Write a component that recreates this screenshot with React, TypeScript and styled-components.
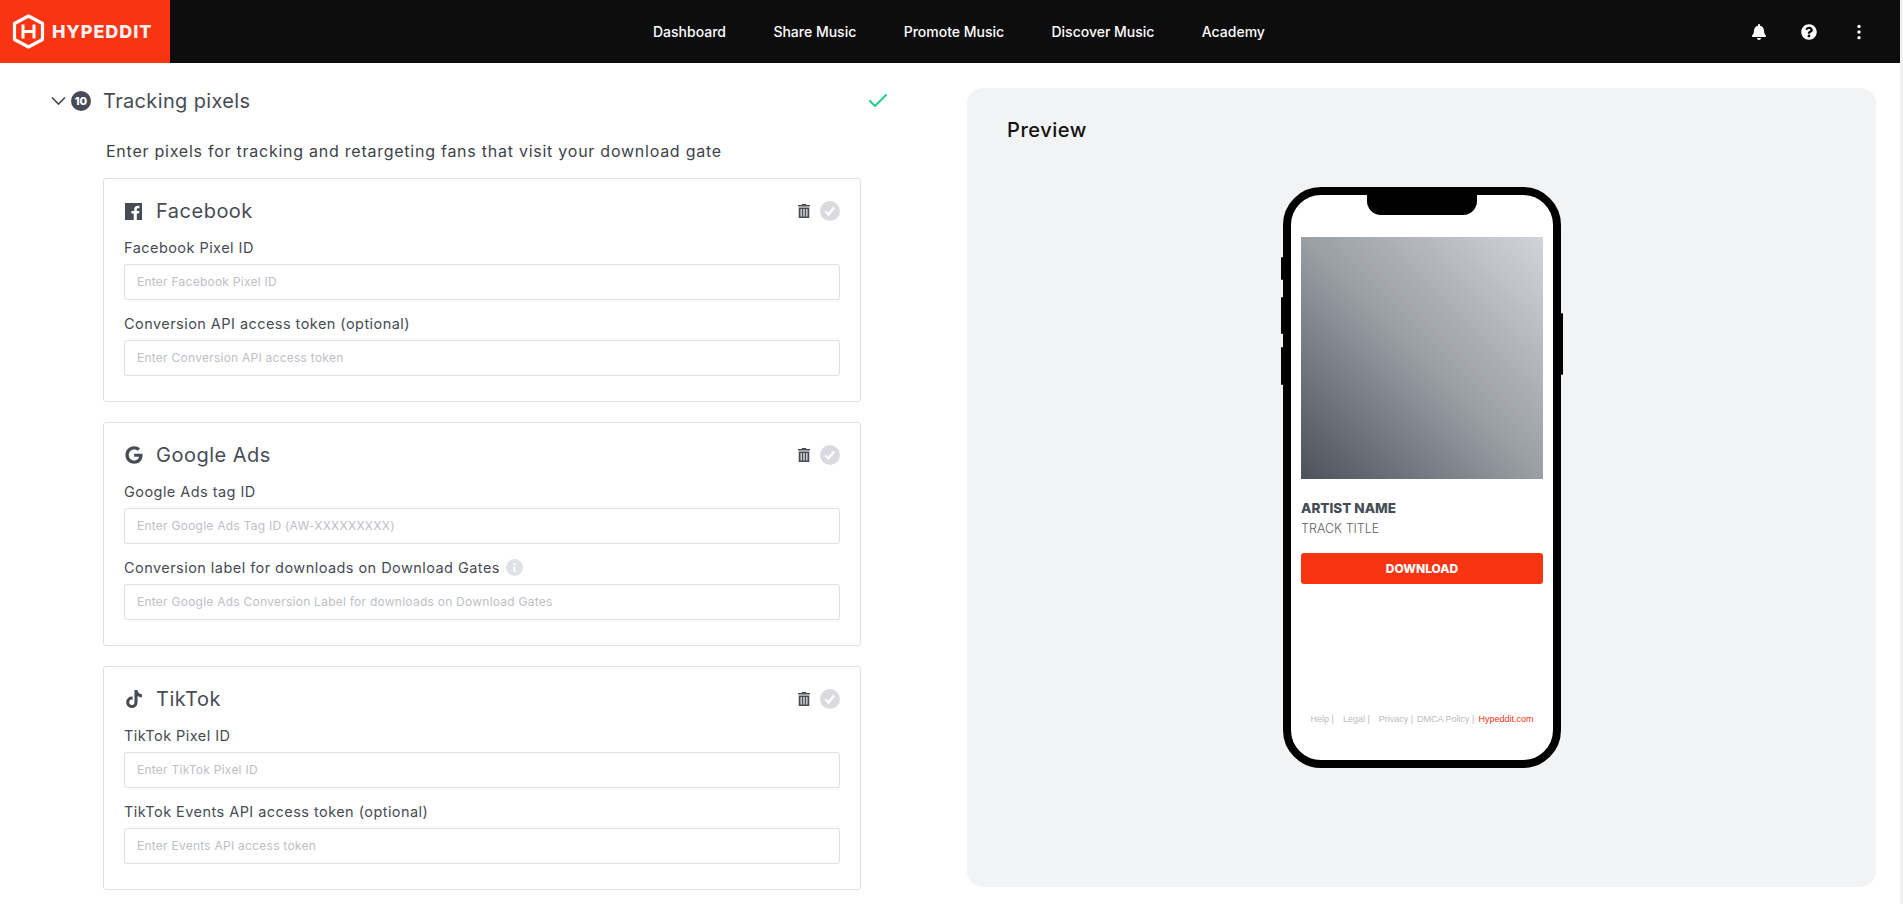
import React from 'react';
import styled, { createGlobalStyle } from 'styled-components';
import { FaBell, FaGoogle, FaTiktok, FaQuestionCircle } from 'react-icons/fa';
import { BsThreeDotsVertical } from 'react-icons/bs';
import { FiCheck } from 'react-icons/fi';

const GlobalStyle = createGlobalStyle`
  html, body {
    margin: 0;
    height: 904px;
    overflow: hidden;
    background: #fff;
  }
  * { box-sizing: border-box; }
`;

const TEXT = '#464c55';
const FONT = `Inter, "Open Sans", sans-serif`;

const ChevronIcon = () => (
  <svg width="15" height="10" viewBox="0 0 15 10">
    <path d="M1 1.500l6.500 6.500 6.500-6.500" fill="none" stroke={TEXT} strokeWidth="1.700" />
  </svg>
);

const FacebookIcon = () => (
  <svg width="17" height="17" viewBox="0 0 17 17">
    <path
      fill={TEXT}
      d="M0 0h17v17h-5.200v-6.400h2.200l.4-2.600h-2.600V6.500c0-.8.3-1.300 1.400-1.300h1.300V2.900c-.4 0-1.100-.1-1.900-.1-2 0-3.400 1.200-3.400 3.400V8H6.400v2.600h2.300V17H0z"
    />
  </svg>
);

const TrashIcon = () => (
  <svg width="12" height="14" viewBox="0 0 12 14">
    <path
      fill={TEXT}
      d="M4 0h4l.5 1H12v1.500H0V1h3.500zM.7 3.500h10.600V14H.7zM2.600 5v7.500h1.100V5zm2.800 0v7.500h1.200V5zm2.900 0v7.500h1.100V5z"
      fillRule="evenodd"
    />
  </svg>
);

const CheckDisc = () => (
  <svg width="20" height="20" viewBox="0 0 20 20">
    <circle cx="10" cy="10" r="10" fill="#d9dbe0" />
    <path d="M5.500 10.500l3 3 5.500-7" fill="none" stroke="#fff" strokeWidth="2.400" />
  </svg>
);

const InfoIcon = () => (
  <svg width="17" height="17" viewBox="0 0 17 17">
    <circle cx="8.500" cy="8.500" r="8.500" fill="#dfe2e6" />
    <rect x="7.500" y="7.500" width="2" height="5.500" fill="#fff" />
    <rect x="7.500" y="4" width="2" height="2" fill="#fff" />
  </svg>
);

const LogoMark = () => (
  <svg width="33" height="35" viewBox="0 0 33 35">
    <path
      d="M16.500 2 L30.500 9.500 V25.500 L16.500 33 L2.500 25.500 V9.500 Z"
      fill="none"
      stroke="#fff"
      strokeWidth="3.200"
      strokeLinejoin="round"
    />
    <path d="M11 10.500v14M22 10.500v14M11 17.500h11" stroke="#fff" strokeWidth="3" fill="none" />
    <path d="M16.500 9v7" stroke="#f93412" strokeWidth="2" />
  </svg>
);

const navItems = ['Dashboard', 'Share Music', 'Promote Music', 'Discover Music', 'Academy'];

const cards = [
  {
    name: 'Facebook',
    icon: <FacebookIcon />,
    fields: [
      { label: 'Facebook Pixel ID', placeholder: 'Enter Facebook Pixel ID' },
      { label: 'Conversion API access token (optional)', placeholder: 'Enter Conversion API access token' },
    ],
  },
  {
    name: 'Google Ads',
    icon: <FaGoogle size={18} color={TEXT} />,
    fields: [
      { label: 'Google Ads tag ID', placeholder: 'Enter Google Ads Tag ID (AW-XXXXXXXXX)' },
      {
        label: 'Conversion label for downloads on Download Gates',
        placeholder: 'Enter Google Ads Conversion Label for downloads on Download Gates',
        info: true,
      },
    ],
  },
  {
    name: 'TikTok',
    icon: <FaTiktok size={18} color={TEXT} />,
    fields: [
      { label: 'TikTok Pixel ID', placeholder: 'Enter TikTok Pixel ID' },
      { label: 'TikTok Events API access token (optional)', placeholder: 'Enter Events API access token' },
    ],
  },
];

const footerLinks = [
  { text: 'Help |', gap: 9 },
  { text: 'Legal |', gap: 9 },
  { text: 'Privacy |', gap: 4 },
  { text: 'DMCA Policy |', gap: 4 },
];

const App = () => (
  <Page>
    <GlobalStyle />
    <Content>
      <Header>
        <LogoBlock>
          <LogoMark />
          <LogoText>HYPEDDIT</LogoText>
        </LogoBlock>
        <Nav>
          {navItems.map((item) => (
            <NavLink key={item}>{item}</NavLink>
          ))}
        </Nav>
        <HeaderIcons>
          <FaBell size={16} />
          <FaQuestionCircle size={16} />
          <BsThreeDotsVertical size={18} />
        </HeaderIcons>
      </Header>
      <Main>
        <LeftColumn>
          <SectionHeader>
            <ChevronIcon />
            <Badge>10</Badge>
            <SectionTitle>Tracking pixels</SectionTitle>
            <DoneCheck>
              <FiCheck size={24} />
            </DoneCheck>
          </SectionHeader>
          <Intro>Enter pixels for tracking and retargeting fans that visit your download gate</Intro>
          <CardList>
            {cards.map((card) => (
              <Card key={card.name}>
                <CardHead>
                  <CardIcon>{card.icon}</CardIcon>
                  <CardTitle>{card.name}</CardTitle>
                  <CardActions>
                    <TrashIcon />
                    <CheckDisc />
                  </CardActions>
                </CardHead>
                {card.fields.map((field) => (
                  <Field key={field.label}>
                    <Label>
                      {field.label}
                      {field.info && <InfoIcon />}
                    </Label>
                    <Input placeholder={field.placeholder} />
                  </Field>
                ))}
              </Card>
            ))}
          </CardList>
        </LeftColumn>
        <PreviewPanel>
          <PreviewTitle>Preview</PreviewTitle>
          <PhoneRow>
            <Phone>
              <SideButton $side="left" $top={62} $height={23} />
              <SideButton $side="left" $top={102} $height={37} />
              <SideButton $side="left" $top={152} $height={38} />
              <SideButton $side="right" $top={118} $height={62} />
              <Notch />
              <Artwork />
              <ArtistName>ARTIST NAME</ArtistName>
              <TrackTitle>TRACK TITLE</TrackTitle>
              <DownloadButton>DOWNLOAD</DownloadButton>
              <PhoneFooter>
                {footerLinks.map((link) => (
                  <FooterLink key={link.text} $gap={link.gap}>
                    {link.text}
                  </FooterLink>
                ))}
                <FooterBrand>Hypeddit.com</FooterBrand>
              </PhoneFooter>
            </Phone>
          </PhoneRow>
        </PreviewPanel>
      </Main>
    </Content>
    <ScrollTrack />
  </Page>
);

const Page = styled.div`
  display: flex;
  width: 1903px;
  height: 904px;
  overflow: hidden;
  font-family: ${FONT};
  color: ${TEXT};
`;

const Content = styled.div`
  flex: 1;
  min-width: 0;
`;

const ScrollTrack = styled.div`
  flex: none;
  width: 3px;
  background: #f0f0f0;
`;

const Header = styled.header`
  display: grid;
  grid-template-columns: 170px 1fr 161px;
  height: 63px;
  background: #0d0d0d;
  color: #fff;
`;

const LogoBlock = styled.div`
  display: flex;
  align-items: center;
  gap: 7px;
  padding-left: 12px;
  background: #f93412;
`;

const LogoText = styled.span`
  font-size: 18px;
  font-weight: 800;
  letter-spacing: 0.9px;
  color: #f4f1f0;
`;

const Nav = styled.nav`
  display: flex;
  align-items: center;
  gap: 47.400px;
  padding-left: 483px;
`;

const NavLink = styled.a`
  font-size: 14px;
  font-weight: 500;
  white-space: nowrap;
`;

const HeaderIcons = styled.div`
  display: flex;
  align-items: center;
  gap: 33.500px;
  padding-left: 12px;
`;

const Main = styled.main`
  display: flex;
  height: 841px;
`;

const LeftColumn = styled.section`
  width: 967px;
  padding: 24px 0 0 51px;
`;

const SectionHeader = styled.div`
  display: flex;
  align-items: center;
  width: 839px;
  height: 28px;
`;

const Badge = styled.span`
  display: flex;
  align-items: center;
  justify-content: center;
  width: 20px;
  height: 20px;
  margin-left: 5px;
  border-radius: 50%;
  background: ${TEXT};
  color: #fff;
  font-size: 11px;
  font-weight: 800;
`;

const SectionTitle = styled.h2`
  margin: 0 0 0 12px;
  font-size: 20px;
  font-weight: 400;
  letter-spacing: 0.35px;
  color: ${TEXT};
`;

const DoneCheck = styled.span`
  display: flex;
  margin-left: auto;
  color: #1fd287;
`;

const Intro = styled.p`
  margin: 25px 0 0 55px;
  font-size: 16px;
  line-height: 22px;
  letter-spacing: 0.75px;
  color: #3d434b;
`;

const CardList = styled.div`
  display: flex;
  flex-direction: column;
  gap: 20px;
  width: 758px;
  margin: 16px 0 0 52px;
`;

const Card = styled.article`
  height: 224px;
  padding: 22px 20px 0;
  border: 1px solid #dde1e6;
  border-radius: 3px;
`;

const CardHead = styled.div`
  display: flex;
  align-items: center;
  height: 20px;
`;

const CardIcon = styled.span`
  display: flex;
  width: 32px;
  padding-left: 1px;
`;

const CardTitle = styled.h3`
  margin: 0;
  font-size: 20px;
  font-weight: 400;
  letter-spacing: 0.5px;
  color: ${TEXT};
`;

const CardActions = styled.div`
  display: flex;
  align-items: center;
  gap: 10px;
  margin-left: auto;
`;

const Field = styled.div`
  margin-top: 15px;
  & + & {
    margin-top: 12px;
  }
`;

const Label = styled.label`
  display: flex;
  align-items: center;
  gap: 6px;
  height: 22px;
  margin-bottom: 6px;
  font-size: 14.500px;
  letter-spacing: 0.45px;
  color: ${TEXT};
`;

const Input = styled.input`
  display: block;
  width: 100%;
  height: 36px;
  padding: 0 12px 2px;
  border: 1px solid #dde1e6;
  border-radius: 3px;
  outline: none;
  font-family: ${FONT};
  font-size: 12px;
  letter-spacing: 0.25px;
  &::placeholder {
    color: #bcc0c7;
  }
`;

const PreviewPanel = styled.section`
  width: 909px;
  height: 799px;
  margin-top: 25px;
  padding: 30px 40px 0;
  border-radius: 16px;
  background: #f2f3f5;
`;

const PreviewTitle = styled.h2`
  margin: 0;
  font-size: 20px;
  line-height: 24px;
  font-weight: 500;
  letter-spacing: 0.55px;
  color: #111;
`;

const PhoneRow = styled.div`
  display: flex;
  padding: 45px 0 0 276px;
`;

const Phone = styled.div`
  position: relative;
  display: flex;
  flex-direction: column;
  width: 278px;
  height: 581px;
  padding: 42px 10px 0;
  border: 8px solid #000;
  border-radius: 38px;
  background: #fff;
`;

const SideButton = styled.span<{ $side: 'left' | 'right'; $top: number; $height: number }>`
  position: absolute;
  ${(p) => p.$side}: -10px;
  top: ${(p) => p.$top}px;
  width: 2px;
  height: ${(p) => p.$height}px;
  border-radius: 1px;
  background: #000;
`;

const Notch = styled.span`
  position: absolute;
  top: 0;
  left: 76px;
  width: 110px;
  height: 20px;
  border-radius: 0 0 14px 14px;
  background: #000;
`;

const Artwork = styled.div`
  flex: none;
  width: 242px;
  height: 242px;
  background: linear-gradient(45deg, #4b525a 0%, #9a9ea5 50%, #d1d4d9 100%);
`;

const ArtistName = styled.div`
  margin-top: 20px;
  font-size: 13.500px;
  line-height: 18px;
  font-weight: 800;
  color: ${TEXT};
`;

const TrackTitle = styled.div`
  margin-top: 3px;
  font-size: 12.500px;
  line-height: 18px;
  font-weight: 300;
  color: #5d636b;
`;

const DownloadButton = styled.div`
  display: flex;
  align-items: center;
  justify-content: center;
  height: 31px;
  margin-top: 15px;
  border-radius: 3px;
  background: #f93412;
  color: #fff;
  font-size: 12px;
  font-weight: 800;
`;

const PhoneFooter = styled.div`
  display: flex;
  justify-content: center;
  margin-top: 129px;
  font-family: 'Liberation Sans', Arial, sans-serif;
  font-size: 9px;
  line-height: 12px;
  white-space: nowrap;
  color: #b7bbc2;
`;

const FooterLink = styled.span<{ $gap: number }>`
  margin-right: ${(p) => p.$gap}px;
`;

const FooterBrand = styled.span`
  color: #f93412;
`;

export default App;
